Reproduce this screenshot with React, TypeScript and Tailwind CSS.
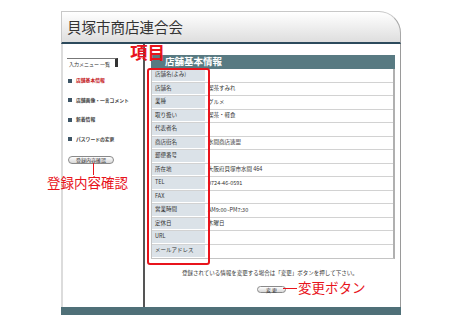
import type { ReactNode } from 'react'

type Row = {
  label: string
  value?: string
}

const rows: Row[] = [
  { label: '店舗名(よみ)' },
  { label: '店舗名', value: '喫茶すみれ' },
  { label: '業種', value: 'グルメ' },
  { label: '取り扱い', value: '喫茶・軽食' },
  { label: '代表者名' },
  { label: '商店街名', value: '水間商店連盟' },
  { label: '郵便番号' },
  { label: '所在地', value: '大阪府貝塚市水間 464' },
  { label: 'TEL', value: '0724-46-0591' },
  { label: 'FAX' },
  { label: '営業時間', value: 'AM9:00~PM7:30' },
  { label: '定休日', value: '木曜日' },
  { label: 'URL' },
  { label: 'メールアドレス' },
]

const menu = [
  { label: '店舗基本情報', active: true },
  { label: '店舗画像・一言コメント', active: false },
  { label: '新着情報', active: false },
  { label: 'パスワードの変更', active: false },
]

function PillButton({ children, className = '' }: { children: ReactNode; className?: string }) {
  return (
    <div
      className={`flex items-center justify-center rounded-full border border-[#8a8a8a] bg-gradient-to-b from-white to-[#d8d8d8] text-[5px] leading-none text-[#333] ${className}`}
    >
      {children}
    </div>
  )
}

export default function App() {
  return (
    <div
      className="relative h-[329px] w-[450px] overflow-hidden bg-white"
      style={{ fontFamily: '"Noto Sans CJK JP", "Noto Sans", sans-serif' }}
    >
      <div className="ml-[61px] mt-[11px] flex w-[340px] flex-col">
        {/* header */}
        <div className="flex h-[33px] items-center rounded-tr-[22px] border-l border-r border-t border-b-2 border-l-[#c8c8c8] border-r-[#a8a8a8] border-t-[#c8c8c8] border-b-[#2c4a5c] bg-gradient-to-b from-white to-[#dedede] pl-[5px]">
          <span className="text-[14.5px] leading-none text-[#333]">貝塚市商店連合会</span>
        </div>

        {/* body */}
        <div className="flex h-[263px]">
          <div className="flex w-[84px] flex-col border-l-2 border-r-2 border-l-[#dcdcdc] border-r-[#555] pl-[4px] pt-[14px]">
            <div className="flex h-[9px] w-[51px] items-center border-t border-r-[3px] border-t-[#777] border-r-[#333] pl-[2px] text-[5px] leading-none text-[#333]">
              入力メニュー 一覧
            </div>
            <div className="mt-[11px] flex flex-col gap-[14.5px] pl-[1px]">
              {menu.map((item) => (
                <div key={item.label} className="flex h-[5px] items-center gap-[4px]">
                  <span className="h-[4px] w-[4px] bg-[#3d5566]" />
                  <span
                    className={`text-[4.8px] font-bold leading-none ${item.active ? 'text-[#c4161c]' : 'text-[#444]'}`}
                  >
                    {item.label}
                  </span>
                </div>
              ))}
            </div>
            <PillButton className="ml-[1px] mt-[14px] h-[8px] w-[46px]">登録内容確認</PillButton>
          </div>

          <div className="flex flex-1 flex-col border-r border-r-[#9a9a9a] pl-[6px] pr-[5px] pt-[11px]">
            <div className="flex h-[14px] items-center bg-[#587a82] pl-[14px]">
              <span className="text-[9.5px] font-bold leading-none text-white">店舗基本情報</span>
            </div>
            <div className="flex flex-col border-b border-l border-r-2 border-[#c4c4c4] border-r-[#b0b0b0]">
              {rows.map((row) => (
                <div key={row.label} className="flex h-[13.5px] border-b border-[#d2d2d2] last:border-b-0">
                  <div className="flex w-[54px] items-center border-b border-r border-white bg-[#dbe2e8] pl-[3px] text-[5.5px] leading-none text-[#333]">
                    {row.label}
                  </div>
                  <div className="flex flex-1 items-center pl-[2px] text-[5.5px] leading-none text-[#333]">
                    {row.value}
                  </div>
                </div>
              ))}
            </div>
            <div className="mt-[12px] pl-[31px] text-[5.5px] leading-none text-[#333]">
              登録されている情報を変更する場合は「変更」ボタンを押して下さい。
            </div>
            <PillButton className="ml-[106px] mt-[9px] h-[7px] w-[29px]">変 更</PillButton>
          </div>
        </div>

        {/* footer bar */}
        <div className="h-[8px] bg-[#4f7078]" />
      </div>

      {/* annotations */}
      <div className="absolute left-[130px] top-[43px] text-[17.5px] font-bold leading-none text-[#e8141c]">項目</div>
      <div className="absolute left-[147px] top-[68px] h-[197px] w-[63px] rounded-[3px] border-2 border-[#e8141c]" />
      <div className="absolute left-[93px] top-[163px] h-[12px] w-px bg-[#e8141c]" />
      <div className="absolute left-[47px] top-[176px] text-[13.5px] leading-none text-[#e8141c]">登録内容確認</div>
      <div className="absolute left-[283px] top-[288px] h-px w-[14px] bg-[#e8141c]" />
      <div className="absolute left-[298px] top-[281px] text-[13.5px] leading-none text-[#e8141c]">変更ボタン</div>
    </div>
  )
}
